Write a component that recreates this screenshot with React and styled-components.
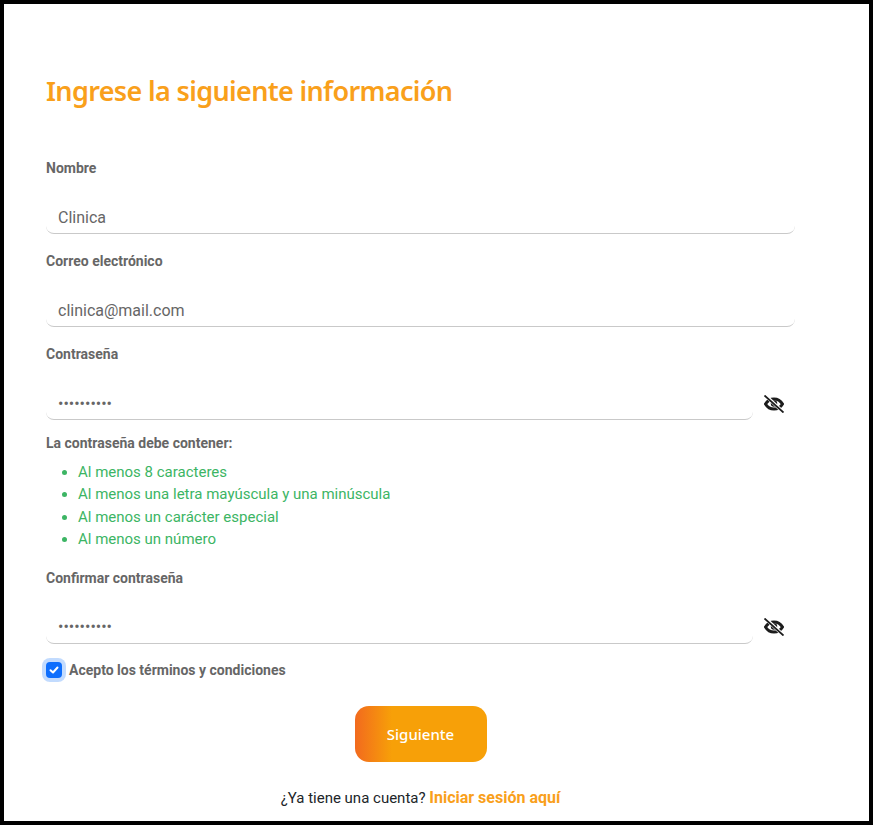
import React from "react";
import styled, { createGlobalStyle } from "styled-components";

const GlobalStyle = createGlobalStyle`
  * { box-sizing: border-box; }
  html, body { margin: 0; padding: 0; background: #fff; }
  body { font-family: Roboto, "Liberation Sans", sans-serif; }
`;

const Frame = styled.main`
  width: 873px;
  height: 825px;
  border: 4px solid #000;
  background: #fff;
  padding: 70px 74px 0 42px;
  overflow: hidden;
`;

const Title = styled.h1`
  margin: 0 0 50px;
  height: 34px;
  font-family: "Noto Sans", "Open Sans", sans-serif;
  font-size: 27px;
  line-height: 34px;
  font-weight: 600;
  letter-spacing: -0.65px;
  color: #f9a01b;
`;

const Field = styled.div`
  display: flex;
  flex-direction: column;
`;

const Label = styled.label`
  height: 20px;
  font-size: 14px;
  line-height: 20px;
  font-weight: 700;
  color: #666;
`;

const InputRow = styled.div`
  display: flex;
  align-items: center;
  margin-top: 23px;
  margin-bottom: 17px;
`;

const TextInput = styled.input`
  flex: 1;
  min-width: 0;
  height: 33px;
  padding: 0 12px;
  border: 0;
  border-bottom: 1px solid #c9c9c9;
  border-radius: 8px;
  outline: none;
  background: transparent;
  font-family: Roboto, sans-serif;
  font-size: 16px;
  color: #666;
`;

const EyeButton = styled.button`
  display: flex;
  align-items: center;
  justify-content: center;
  width: 42px;
  height: 33px;
  padding: 0;
  border: 0;
  background: none;
`;

const RulesTitle = styled.p`
  margin: -4px 0 0;
  height: 20px;
  font-size: 14px;
  line-height: 20px;
  font-weight: 700;
  color: #666;
`;

const Rules = styled.ul`
  margin: 8px 0 17px;
  padding: 0 0 0 32px;
  font-size: 15px;
  line-height: 22.4px;
  color: #3cb564;
`;

const CheckRow = styled.label`
  display: flex;
  align-items: center;
  gap: 7px;
  margin: -1px 0 0;
  height: 20px;
  font-size: 14px;
  font-weight: 700;
  color: #666;
`;

const CheckBox = styled.span`
  display: flex;
  align-items: center;
  justify-content: center;
  width: 16px;
  height: 16px;
  border-radius: 4px;
  background: #0d6efd;
  box-shadow: 0 0 0 4px rgba(13, 110, 253, 0.25);
`;

const Actions = styled.div`
  display: flex;
  justify-content: center;
  margin-top: 26px;
`;

const NextButton = styled.button`
  width: 132px;
  height: 56px;
  border: 0;
  border-radius: 14px;
  background: linear-gradient(90deg, #f26a1e 0%, #f7a008 28%, #f7a008 100%);
  font-family: "Noto Sans", "Open Sans", sans-serif;
  font-size: 15px;
  font-weight: 500;
  color: #fff;
`;

const LoginLine = styled.p`
  margin: 25px 0 0;
  text-align: center;
  font-size: 15px;
  line-height: 22px;
  color: #212529;
`;

const LoginLink = styled.a`
  font-size: 16px;
  font-weight: 700;
  color: #f9a01b;
  text-decoration: none;
`;

function EyeOff() {
  return (
    <svg width="20" height="18" viewBox="0 0 20 18" fill="none">
      <path d="M1.500 9c2-3.400 4.900-5.100 8.500-5.100s6.500 1.700 8.500 5.100c-2 3.400-4.900 5.100-8.500 5.100s-6.500-1.700-8.500-5.100z" stroke="#1c1c1c" strokeWidth="3" />
      <circle cx="10" cy="8.500" r="3.200" fill="#1c1c1c" />
      <path d="M2.500 1.500 L18 16" stroke="#fff" strokeWidth="3.400" />
      <path d="M0.500 0.500 L19.500 17.500" stroke="#1c1c1c" strokeWidth="1.800" />
    </svg>
  );
}

const rules = [
  "Al menos 8 caracteres",
  "Al menos una letra mayúscula y una minúscula",
  "Al menos un carácter especial",
  "Al menos un número",
];

export default function App() {
  return (
    <Frame>
      <GlobalStyle />
      <Title>Ingrese la siguiente información</Title>

      <Field>
        <Label>Nombre</Label>
        <InputRow>
          <TextInput readOnly value="Clinica" />
        </InputRow>
      </Field>

      <Field>
        <Label>Correo electrónico</Label>
        <InputRow>
          <TextInput readOnly value="clinica@mail.com" />
        </InputRow>
      </Field>

      <Field>
        <Label>Contraseña</Label>
        <InputRow>
          <TextInput readOnly type="password" value="Clinica123" />
          <EyeButton type="button"><EyeOff /></EyeButton>
        </InputRow>
      </Field>

      <RulesTitle>La contraseña debe contener:</RulesTitle>
      <Rules>
        {rules.map((rule) => <li key={rule}>{rule}</li>)}
      </Rules>

      <Field>
        <Label>Confirmar contraseña</Label>
        <InputRow>
          <TextInput readOnly type="password" value="Clinica123" />
          <EyeButton type="button"><EyeOff /></EyeButton>
        </InputRow>
      </Field>

      <CheckRow>
        <CheckBox>
          <svg width="12" height="12" viewBox="0 0 12 12" fill="none">
            <path d="M2.500 6.200 5 8.500 9.500 3.500" stroke="#fff" strokeWidth="2" strokeLinecap="round" strokeLinejoin="round" />
          </svg>
        </CheckBox>
        Acepto los términos y condiciones
      </CheckRow>

      <Actions>
        <NextButton type="button">Siguiente</NextButton>
      </Actions>

      <LoginLine>
        ¿Ya tiene una cuenta? <LoginLink href="#">Iniciar sesión aquí</LoginLink>
      </LoginLine>
    </Frame>
  );
}
